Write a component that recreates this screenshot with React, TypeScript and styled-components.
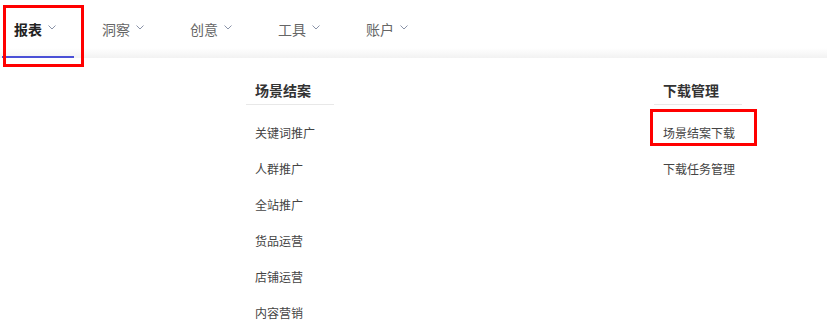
import React from "react";
import styled, { createGlobalStyle, css } from "styled-components";

const GlobalStyle = createGlobalStyle`
  html, body {
    margin: 0;
    padding: 0;
    background: #fff;
    font-family: "Noto Sans CJK SC", "Noto Sans", sans-serif;
    color: #333;
  }
`;

const highlight = css`
  &::after {
    content: "";
    position: absolute;
    border: 3px solid #f00;
    box-sizing: border-box;
    pointer-events: none;
  }
`;

const NavBar = styled.nav`
  display: flex;
  gap: 16px;
  height: 58px;
  padding-left: 2px;
  background: linear-gradient(to bottom, #fff 48px, #f2f2f2 58px);
`;

const NavItem = styled.div<{ $active?: boolean; $marked?: boolean }>`
  position: relative;
  display: flex;
  align-items: center;
  gap: 6px;
  width: 72px;
  height: 58px;
  padding-left: 12px;
  box-sizing: border-box;
  font-size: 14px;
  line-height: 20px;
  color: ${(p) => (p.$active ? "#222" : "#666")};
  font-weight: ${(p) => (p.$active ? 700 : 400)};
  cursor: pointer;

  ${(p) =>
    p.$active &&
    css`
      &::before {
        content: "";
        position: absolute;
        left: 0;
        right: 0;
        bottom: 0;
        height: 2px;
        background: #4a50d6;
      }
    `}

  ${(p) =>
    p.$marked &&
    css`
      ${highlight}
      &::after {
        left: 1px;
        top: 5px;
        width: 81px;
        height: 62px;
      }
    `}
`;

const Chevron = styled.svg`
  width: 8px;
  height: 5px;
  margin-top: -3px;
  flex-shrink: 0;
`;

const Dropdown = styled.div`
  display: flex;
  gap: 320px;
  padding: 21px 0 0 246px;
`;

const Column = styled.div`
  width: 88px;
`;

const ColumnTitle = styled.div`
  padding: 0 0 3px 9px;
  font-size: 14px;
  line-height: 22px;
  font-weight: 700;
  color: #333;
  border-bottom: 1px solid #e8e8e8;
  white-space: nowrap;
`;

const LinkList = styled.div`
  display: flex;
  flex-direction: column;
  padding-top: 9px;
`;

const LinkItem = styled.div<{ $marked?: boolean }>`
  position: relative;
  height: 36px;
  display: flex;
  align-items: center;
  padding-left: 9px;
  font-size: 12px;
  color: #444;
  white-space: nowrap;
  cursor: pointer;

  ${(p) =>
    p.$marked &&
    css`
      ${highlight}
      &::after {
        left: -4px;
        top: -5px;
        width: 107px;
        height: 37px;
      }
    `}
`;

const ChevronIcon = () => (
  <Chevron viewBox="0 0 8 5">
    <path d="M0.5 0.5 L4 4 L7.5 0.5" fill="none" stroke="#8a93a8" strokeWidth="1" />
  </Chevron>
);

const tabs = ["报表", "洞察", "创意", "工具", "账户"];

const columns = [
  {
    title: "场景结案",
    items: ["关键词推广", "人群推广", "全站推广", "货品运营", "店铺运营", "内容营销"],
  },
  {
    title: "下载管理",
    items: ["场景结案下载", "下载任务管理"],
  },
];

export default function App() {
  return (
    <>
      <GlobalStyle />
      <NavBar>
        {tabs.map((t, i) => (
          <NavItem key={t} $active={i === 0} $marked={i === 0}>
            <span>{t}</span>
            <ChevronIcon />
          </NavItem>
        ))}
      </NavBar>
      <Dropdown>
        {columns.map((col) => (
          <Column key={col.title}>
            <ColumnTitle>{col.title}</ColumnTitle>
            <LinkList>
              {col.items.map((it) => (
                <LinkItem key={it} $marked={it === "场景结案下载"}>
                  {it}
                </LinkItem>
              ))}
            </LinkList>
          </Column>
        ))}
      </Dropdown>
    </>
  );
}
